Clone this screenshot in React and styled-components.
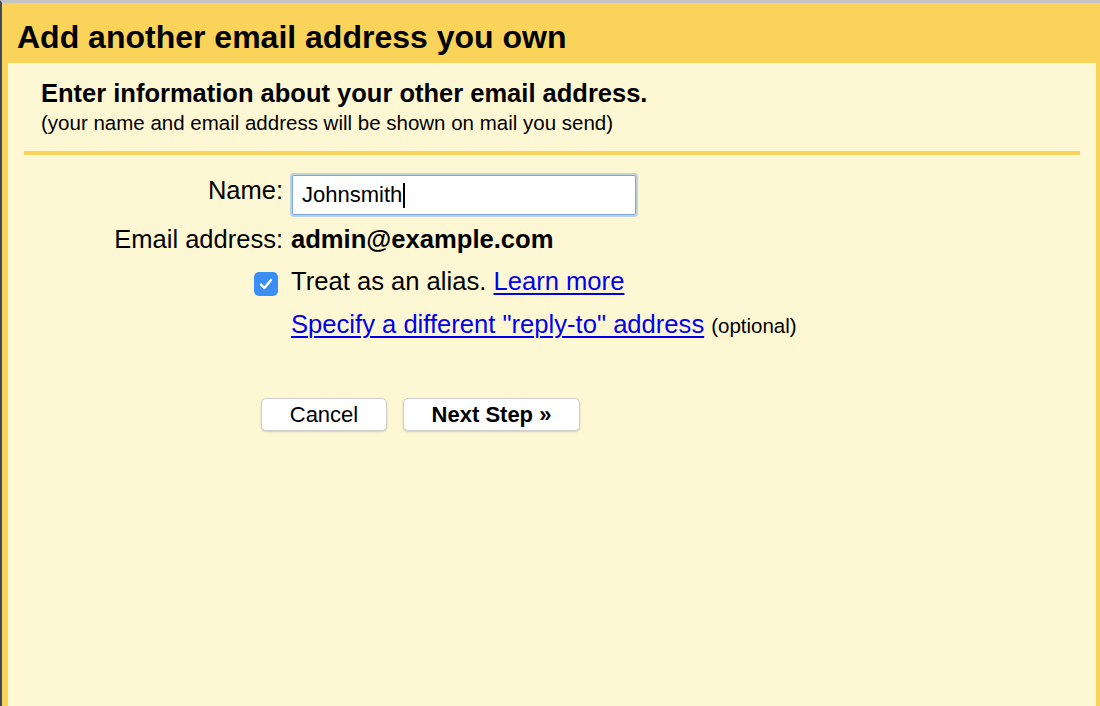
import React from 'react';
import styled, { createGlobalStyle } from 'styled-components';

const GlobalStyle = createGlobalStyle`
  html, body {
    margin: 0;
    padding: 0;
    background: #3e4a5c;
  }
  body {
    font-family: 'Liberation Sans', Arial, sans-serif;
    color: #000;
  }
`;

const Window = styled.div`
  box-sizing: border-box;
  display: flex;
  flex-direction: column;
  width: 1100px;
  height: 706px;
  overflow: hidden;
  border-left: 2px solid #3e4a5c;
  border-top: 3px solid #c4c4c4;
  background: #fad35b;
`;

const Header = styled.h1`
  box-sizing: border-box;
  margin: 0;
  height: 60px;
  padding: 8px 0 0 15px;
  font-size: 32px;
  line-height: 52px;
  font-weight: 700;
  white-space: nowrap;
`;

const Panel = styled.div`
  flex: 1;
  margin: 0 4px 0 6px;
  padding-top: 15px;
  background: #fef7d4;
`;

const Intro = styled.div`
  padding-left: 33px;
`;

const Subheading = styled.h2`
  margin: 0;
  font-size: 25.5px;
  line-height: 30px;
  font-weight: 700;
`;

const Note = styled.p`
  margin: 3px 0 0;
  font-size: 20.5px;
  line-height: 24px;
`;

const Divider = styled.hr`
  margin: 16px 16px 0;
  border: 0;
  height: 4px;
  background: #fad35b;
`;

const Form = styled.div`
  display: grid;
  grid-template-columns: 275px 1fr;
  column-gap: 8px;
  margin-top: 20px;
`;

const Label = styled.div`
  grid-column: 1;
  text-align: right;
  font-size: 25.5px;
  line-height: 30px;
  white-space: nowrap;
  margin-top: ${(p) => p.$top || 0}px;
`;

const Value = styled.div`
  grid-column: 2;
  display: flex;
  align-items: baseline;
  font-size: 25.6px;
  line-height: 30px;
  font-weight: ${(p) => (p.$bold ? 700 : 400)};
  white-space: nowrap;
  margin-top: ${(p) => p.$top || 0}px;
`;

const FieldBox = styled.div`
  grid-column: 2;
  box-sizing: border-box;
  width: 344px;
  height: 40px;
  margin-left: 1px;
  padding-left: 9px;
  display: flex;
  align-items: center;
  background: #fff;
  border: 1px solid #78a6e2;
  box-shadow: 0 0 0 2px rgba(138, 180, 232, 0.55);
  border-radius: 2px;
  font-size: 22px;
`;

const Caret = styled.span`
  display: inline-block;
  width: 1.5px;
  height: 25px;
  margin-left: 1px;
  background: #000;
`;

const CheckCell = styled.div`
  grid-column: 1;
  display: flex;
  justify-content: flex-end;
  align-items: center;
  padding-right: 5px;
  margin-top: ${(p) => p.$top || 0}px;
`;

const CheckBox = styled.span`
  width: 24px;
  height: 24px;
  margin-top: 5px;
  border-radius: 5px;
  background: #3a8ef6;
  display: flex;
  align-items: center;
  justify-content: center;
`;

const Link = styled.a`
  color: #0000ee;
  text-decoration: underline;
  text-underline-offset: 3px;
  text-decoration-thickness: 2px;
  cursor: pointer;
`;

const Hint = styled.span`
  margin-left: 7px;
  font-size: 20.5px;
`;

const Actions = styled.div`
  display: flex;
  gap: 16px;
  margin-top: 57px;
  padding-left: 253px;
`;

const Button = styled.button`
  box-sizing: border-box;
  height: 33px;
  width: ${(p) => p.$width}px;
  padding: 0;
  background: #fff;
  border: 1px solid #cfcfcf;
  border-radius: 5px;
  box-shadow: 0 1px 2px rgba(0, 0, 0, 0.18);
  font-family: 'Liberation Sans', Arial, sans-serif;
  font-size: 22px;
  font-weight: ${(p) => (p.$primary ? 700 : 400)};
  color: #000;
`;

export default function App() {
  return (
    <>
      <GlobalStyle />
      <Window>
        <Header>Add another email address you own</Header>
        <Panel>
          <Intro>
            <Subheading>Enter information about your other email address.</Subheading>
            <Note>(your name and email address will be shown on mail you send)</Note>
          </Intro>
          <Divider />

          <Form>
            <Label>Name:</Label>
            <FieldBox>
              Johnsmith
              <Caret />
            </FieldBox>

            <Label $top={9}>Email address:</Label>
            <Value $top={9} $bold>
              admin@example.com
            </Value>

            <CheckCell $top={12}>
              <CheckBox>
                <svg width="18" height="18" viewBox="0 0 18 18">
                  <path
                    d="M4 9.6 L7.4 13 L14 5"
                    fill="none"
                    stroke="#fff"
                    strokeWidth="2.4"
                    strokeLinecap="round"
                    strokeLinejoin="round"
                  />
                </svg>
              </CheckBox>
            </CheckCell>
            <Value $top={12}>
              Treat as an alias.&nbsp;<Link>Learn more</Link>
            </Value>

            <Value $top={13}>
              <Link>Specify a different "reply-to" address</Link>
              <Hint>(optional)</Hint>
            </Value>
          </Form>

          <Actions>
            <Button $width={126}>Cancel</Button>
            <Button $width={177} $primary>
              Next Step »
            </Button>
          </Actions>
        </Panel>
      </Window>
    </>
  );
}
